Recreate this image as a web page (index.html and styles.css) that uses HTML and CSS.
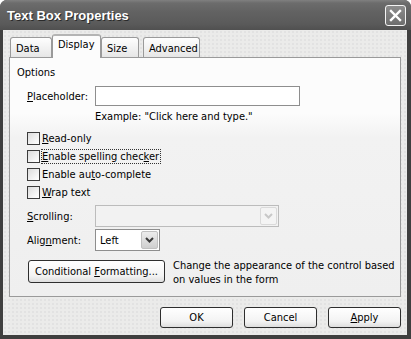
FILE: index.html
```html
<!DOCTYPE html>
<html>
<head>
<meta charset="utf-8">
<link rel="stylesheet" href="styles.css">
</head>
<body>
<div class="window">
  <div class="titlebar">
    <span class="title">Text Box Properties</span>
    <span class="close"><svg width="21" height="21" viewBox="0 0 21 21"><path d="M6 6 L15 15 M15 6 L6 15" stroke="#fff" stroke-width="2.4" stroke-linecap="square"/></svg></span>
  </div>
  <div class="client">
    <div class="tabs">
      <div class="tab">Data</div>
      <div class="tab sel">Display</div>
      <div class="tab t-size">Size</div>
      <div class="tab t-adv">Advanced</div>
    </div>
    <div class="panel">
      <div class="group">Options</div>
      <div class="row r-place">
        <span class="lbl"><u>P</u>laceholder:</span>
        <span class="input"></span>
      </div>
      <div class="example">Example: "Click here and type."</div>
      <div class="checks">
        <label class="cb"><span class="box"></span><span><u>R</u>ead-only</span></label>
        <label class="cb"><span class="box"></span><span class="focus"><u>E</u>nable spelling chec<u>k</u>er</span></label>
        <label class="cb"><span class="box"></span><span>Enable au<u>t</u>o-complete</span></label>
        <label class="cb"><span class="box"></span><span><u>W</u>rap text</span></label>
      </div>
      <div class="row r-scroll">
        <span class="lbl"><u>S</u>crolling:</span>
        <span class="select disabled"><span class="val"></span><span class="arrow"><svg width="9" height="6" viewBox="0 0 9 6"><path d="M1 1 L4.5 4.5 L8 1" stroke="#c8c8c8" stroke-width="2" fill="none"/></svg></span></span>
      </div>
      <div class="row r-align">
        <span class="lbl">Alig<u>n</u>ment:</span>
        <span class="select small"><span class="val">Left</span><span class="arrow"><svg width="9" height="6" viewBox="0 0 9 6"><path d="M1 1 L4.5 4.5 L8 1" stroke="#3a3a3a" stroke-width="2" fill="none"/></svg></span></span>
      </div>
      <div class="row r-cond">
        <span class="btn cond">Conditional&nbsp;<u>F</u>ormatting...</span>
        <span class="desc">Change the appearance of the control based<br>on values in the form</span>
      </div>
    </div>
    <div class="footer">
      <span class="btn dlg">OK</span>
      <span class="btn dlg">Cancel</span>
      <span class="btn dlg"><u>A</u>pply</span>
    </div>
  </div>
</div>
</body>
</html>
```
FILE: styles.css
```css
* { box-sizing: border-box; }
html, body { margin: 0; padding: 0; }
body {
  width: 411px; height: 339px; overflow: hidden;
  font-family: "DejaVu Sans Condensed", "DejaVu Sans", Tahoma, sans-serif;
  font-size: 11px; color: #000;
  background: #fff;
  white-space: nowrap;
}
.window {
  width: 411px; height: 339px;
  display: flex; flex-direction: column;
  background: #3f3f3f;
  border-radius: 7px 7px 0 0;
  overflow: hidden;
}
.titlebar {
  height: 30px; flex: none;
  display: flex; align-items: center; justify-content: space-between;
  padding: 0 5px 0 7px;
  background: linear-gradient(#808080 0px, #6c6c6c 3px, #626262 12px, #5a5a5a 24px, #505050 30px);
}
.title {
  color: #fff; font-weight: bold; font-size: 13px;
  font-family: "Liberation Sans", Arial, sans-serif;
  text-shadow: 1px 1px 0 #2a2a2a;
}
.close {
  width: 21px; height: 21px;
  border: 1px solid #f4f4f4; border-radius: 3px;
  background: linear-gradient(#8c8c8c, #6e6e6e);
  display: flex; align-items: center; justify-content: center;
  margin-top: 1px;
}
.close svg { display: block; margin: -1px; }
.client {
  flex: 1;
  margin: 0 4px 4px 3px;
  background-color: #ebebea;
  background-image: radial-gradient(circle, #e2e2e2 0.8px, transparent 1px);
  background-size: 4px 4px;
  padding: 4px 0 0 6px;
  display: flex; flex-direction: column;
}
.tabs {
  display: flex; align-items: flex-end;
  height: 23px; padding-left: 1px;
  position: relative; z-index: 1;
}
.tab {
  height: 20px;
  border: 1px solid #9a9a9a; border-bottom: none;
  border-radius: 3px 3px 0 0;
  background: linear-gradient(#fefefe, #f0f0f0 60%, #e6e6e6);
  padding: 4px 5px 0 5px;
  margin-right: 1px;
  line-height: 14px;
}
.tab:first-child { width: 42px; }
.tab.sel {
  height: 24px; margin-bottom: -1px;
  width: 49px;
  background: #fcfcfc;
  border-top: 2px solid #b4b4b4;
  padding-top: 2px;
  margin-right: 0;
  margin-left: -1px;
}
.t-size { width: 38px; }
.t-adv { width: 57px; margin-left: 3px; }
.panel {
  width: 392px; height: 240px;
  border: 1px solid #9a9a9a;
  background: linear-gradient(#fcfcfc 0, #fcfcfc 55px, #f2f2f2 80px, #efefef 100%);
  padding: 7px 0 0 7px;
}
.group { height: 16px; line-height: 16px; }
.row { display: flex; align-items: center; }
.lbl { width: 78px; flex: none; padding-left: 10px; }
.r-place { margin-top: 5px; height: 20px; }
.input {
  width: 205px; height: 20px;
  border: 1px solid #8e8e8e; background: #fff;
}
.example { padding-left: 78px; margin-top: 3px; height: 16px; line-height: 16px; }
.checks { margin-top: 4px; padding-left: 10px; display: flex; flex-direction: column; }
.cb { display: flex; align-items: center; height: 18px; }
.cb:last-child { height: 19px; }
.box {
  width: 13px; height: 13px; flex: none;
  border: 1px solid #3c3c3c;
  background: linear-gradient(135deg, #dcdcdc, #f6f6f6 70%, #fff);
  margin-right: 2px;
}
.focus { outline: 1px dotted #333; outline-offset: 0; padding: 0 1px 0 0; }
.r-scroll { margin-top: 3px; height: 22px; }
.select {
  height: 22px; border: 1px solid #8e8e8e; background: #fff;
  display: flex; align-items: center; justify-content: space-between;
  padding: 1px;
}
.select.disabled { width: 184px; border-color: #bcbcbc; background: #f2f2f2; }
.select .val { padding-left: 3px; }
.arrow {
  width: 17px; height: 18px;
  border: 1px solid #c0c0c0; border-radius: 2px;
  background: linear-gradient(#ececec, #cfcfcf);
  display: flex; align-items: center; justify-content: center;
}
.select.disabled .arrow { background: #f4f4f4; border-color: #dadada; }
.select.small { width: 65px; }
.r-align { margin-top: 2px; height: 22px; }
.r-cond { margin-top: 9px; align-items: flex-start; padding-left: 11px; }
.btn {
  display: inline-flex; align-items: center; justify-content: center;
  border: 1px solid #2e2e2e; border-radius: 3px;
  background: linear-gradient(#ffffff, #f3f3f3 70%, #dedede);
  height: 22px;
}
.cond { width: 137px; height: 23px; }
.desc { margin-left: 8px; line-height: 14px; margin-top: -1px; }
.footer {
  display: flex; justify-content: flex-end; gap: 11px;
  padding: 10px 0 0 0;
  width: 392px;
}
.dlg { width: 73px; height: 21px; }
```
